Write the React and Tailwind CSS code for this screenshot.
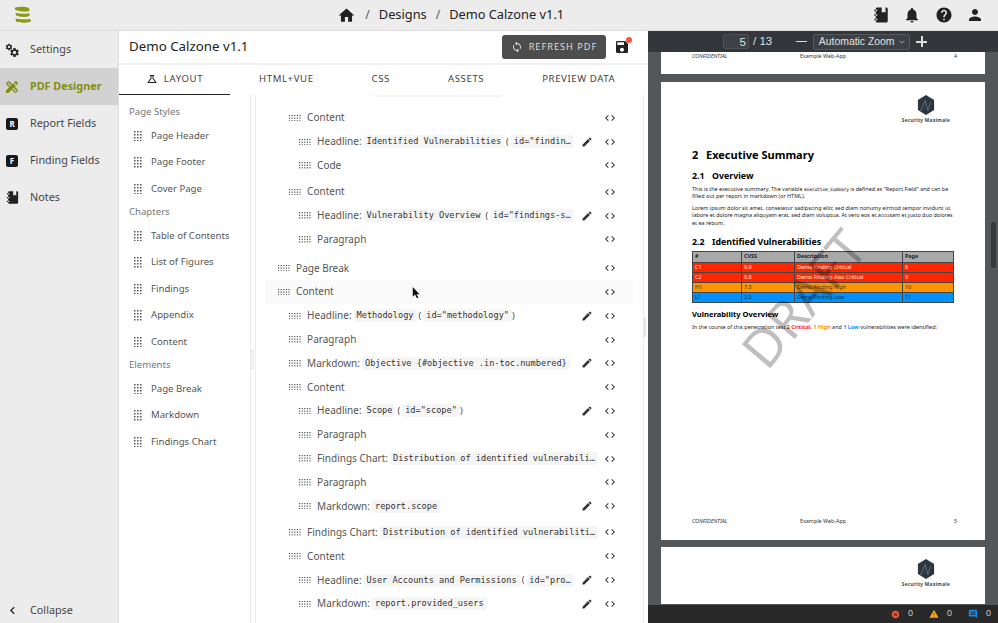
import { MdHome, MdNotifications, MdHelp, MdPerson, MdEdit, MdCode, MdSync, MdSave, MdChevronLeft, MdSettings, MdDesignServices, MdOutlineScience, MdCancel, MdWarning, MdComment } from "react-icons/md";

const notebook = "M3,7V5H5V4C5,2.89 5.9,2 7,2H13V9L15.5,7.5L18,9V2H19C20.05,2 21,2.95 21,4V20C21,21.05 20.05,22 19,22H7C5.95,22 5,21.05 5,20V19H3V17H5V13H3V11H5V7H3M7,11H5V13H7V11M7,7V5H5V7H7M7,19V17H5V19H7Z";

const Notebook = ({ className }) => (
    <svg viewBox="0 0 24 24" className={className} fill="currentColor"><path d={notebook} /></svg>
);

const Dots = ({ cols, rows, step = 2.6, size = 1.2, className }) => {
    const dots = [];
    for (let y = 0; y < rows; y++) {
        for (let x = 0; x < cols; x++) {
            dots.push(<rect key={x + "-" + y} x={x * step} y={y * step} width={size} height={size} />);
        }
    }
    return (
        <svg width={(cols - 1) * step + size} height={(rows - 1) * step + size} className={className} fill="#555">{dots}</svg>
    );
};

const Logo = () => (
    <svg viewBox="0 0 18 18" className="h-[18px] w-[18px]" fill="#8a9a12">
        <path d="M1 1.5C5 .5 11 .5 15 2L15.5 5C11 6.2 5 5.5 1 3.8Z" />
        <path d="M1.5 6.8C6 8 11 8 15.5 7.2L15.5 10C11 11.5 6 11 2 9.6Z" />
        <path d="M1.5 12.5C6 13.5 12 13.2 16.5 13L17 15.5C12 17.2 6 17 2 15.5Z" />
    </svg>
);

const Letter = ({ children }) => (
    <span className="flex h-[12px] w-[12px] items-center justify-center rounded-[2px] bg-[#1a1a1a] text-[8px] font-bold leading-none text-white">{children}</span>
);

const Cogs = () => (
    <span className="relative block h-[14px] w-[14px]">
        <MdSettings className="absolute top-0 left-0 h-[8px] w-[8px] text-[#222]" />
        <MdSettings className="absolute right-[-1px] bottom-[-1px] h-[11px] w-[11px] text-[#222]" />
    </span>
);

const navItems = [
    { label: "Settings", icon: <Cogs /> },
    { label: "PDF Designer", icon: <MdDesignServices className="h-[16px] w-[16px] text-[#7f8f12]" />, active: true },
    { label: "Report Fields", icon: <Letter>R</Letter> },
    { label: "Finding Fields", icon: <Letter>F</Letter> },
    { label: "Notes", icon: <Notebook className="h-[15px] w-[15px] text-[#222]" /> },
];

const palette = [
    { title: "Page Styles", items: ["Page Header", "Page Footer", "Cover Page"] },
    { title: "Chapters", items: ["Table of Contents", "List of Figures", "Findings", "Appendix", "Content"] },
    { title: "Elements", items: ["Page Break", "Markdown", "Findings Chart"] },
];

const tabs = ["HTML+VUE", "CSS", "ASSETS", "PREVIEW DATA"];

// indent: 0 = page level, 1 = nested, 2 = nested twice
const tree = [
    { indent: 1, label: "Content" },
    { indent: 2, label: "Headline:", code: "Identified Vulnerabilities", id: 'id="findin…', edit: true },
    { indent: 2, label: "Code" },
    { indent: 1, label: "Content", gap: true },
    { indent: 2, label: "Headline:", code: "Vulnerability Overview", id: 'id="findings-s…', edit: true },
    { indent: 2, label: "Paragraph" },
    { indent: 0, label: "Page Break", bigGap: true },
    { indent: 0, label: "Content", hover: true },
    { indent: 1, label: "Headline:", code: "Methodology", id: 'id="methodology"', closed: true, edit: true },
    { indent: 1, label: "Paragraph" },
    { indent: 1, label: "Markdown:", code: "Objective {#objective .in-toc.numbered}", edit: true },
    { indent: 1, label: "Content" },
    { indent: 2, label: "Headline:", code: "Scope", id: 'id="scope"', closed: true, edit: true },
    { indent: 2, label: "Paragraph" },
    { indent: 2, label: "Findings Chart:", code: "Distribution of identified vulnerabili…" },
    { indent: 2, label: "Paragraph" },
    { indent: 2, label: "Markdown:", code: "report.scope", edit: true },
    { indent: 1, label: "Findings Chart:", code: "Distribution of identified vulnerabiliti…", gap: true },
    { indent: 1, label: "Content" },
    { indent: 2, label: "Headline:", code: "User Accounts and Permissions", id: 'id="pro…', edit: true },
    { indent: 2, label: "Markdown:", code: "report.provided_users", edit: true },
];

const Chip = ({ children }) => (
    <span className="whitespace-nowrap rounded-[3px] bg-[#f5f5f5] px-[3px] text-[8.6px] leading-[13px] text-[#333] [font-family:'DejaVu_Sans_Mono',monospace]">{children}</span>
);

const TreeRow = ({ row }) => (
    <div className={"flex h-[23.8px] items-center pr-[17px] " + (row.hover ? "bg-[#fafafa] " : "") + (row.gap ? "mt-[2.5px] " : "") + (row.bigGap ? "mt-[5px] " : "") + (row.indent === 0 ? "pl-[13px]" : row.indent === 1 ? "pl-[24px]" : "pl-[34px]")}>
        <Dots cols={5} rows={3} className="mr-[6.5px] shrink-0" />
        <span className="mr-[2px] shrink-0 text-[10px] text-[#555]">{row.label}</span>
        {row.code && <Chip>{row.code}</Chip>}
        {row.id && (
            <span className="ml-[2px] flex items-center text-[9px] text-[#444]">
                <span className="mr-[2px]">(</span>
                <Chip>{row.id}</Chip>
                {row.closed && <span>)</span>}
            </span>
        )}
        <span className="flex-1" />
        {row.edit && <MdEdit className="mr-[11px] h-[12px] w-[12px] shrink-0 text-[#333]" />}
        <MdCode className="h-[12px] w-[12px] shrink-0 text-[#333]" />
    </div>
);

const ToolbarSep = () => <span className="text-[12px] text-[#555]">/</span>;

const TopBar = () => (
    <header className="flex h-[31px] shrink-0 items-center border-b border-[#dcdcdc] bg-[#ececec]">
        <div className="w-[118px] pl-[14px]"><Logo /></div>
        <div className="flex flex-1 items-center justify-center gap-[9px] pr-[88px] text-[12.8px] text-[#222]">
            <MdHome className="h-[19px] w-[19px] text-[#222]" />
            <ToolbarSep />
            <span>Designs</span>
            <ToolbarSep />
            <span>Demo Calzone v1.1</span>
        </div>
        <div className="flex items-center gap-[13.5px] pr-[14px] text-[#222]">
            <Notebook className="h-[18px] w-[18px]" />
            <MdNotifications className="h-[18px] w-[18px]" />
            <MdHelp className="h-[18px] w-[18px]" />
            <MdPerson className="h-[18px] w-[18px]" />
        </div>
    </header>
);

const Sidebar = () => (
    <nav className="flex w-[119px] shrink-0 flex-col border-r border-[#dedede] bg-[#ececec]">
        {navItems.map((item) => (
            <div key={item.label} className={"flex h-[37px] items-center " + (item.active ? "bg-[#d2d2d2]" : "")}>
                <span className="mr-[6px] flex w-[24px] justify-center">{item.icon}</span>
                <span className={"text-[10.8px] " + (item.active ? "font-bold text-[#7f8f12]" : "text-[#444]")}>{item.label}</span>
            </div>
        ))}
        <div className="mt-auto flex h-[26px] items-center">
            <span className="mr-[6px] flex w-[24px] justify-center"><MdChevronLeft className="h-[15px] w-[15px] text-[#222]" /></span>
            <span className="text-[10.8px] text-[#444]">Collapse</span>
        </div>
    </nav>
);

const Palette = () => (
    <div className="w-[132px] shrink-0 border-r border-[#ececec] pt-[7px]">
        {palette.map((group) => (
            <div key={group.title}>
                <div className="pl-[10px] text-[9.6px] leading-[20.5px] text-[#777]">{group.title}</div>
                {group.items.map((item) => (
                    <div key={item} className="flex h-[26.5px] items-center pl-[15px]">
                        <Dots cols={3} rows={4} step={3} size={1.5} className="mr-[9.5px]" />
                        <span className="text-[9.6px] text-[#555]">{item}</span>
                    </div>
                ))}
            </div>
        ))}
    </div>
);

const Designer = () => (
    <section className="flex w-[529px] shrink-0 flex-col overflow-hidden bg-white">
        <div className="flex h-[34px] shrink-0 items-center border-b-2 border-[#f1f1f1] pl-[10px]">
            <h1 className="text-[13.3px] text-[#222]">Demo Calzone v1.1</h1>
            <button className="ml-auto flex h-[24px] w-[104px] items-center justify-center gap-[6px] rounded-[3px] bg-[#4d4d4d] text-[9.2px] tracking-[1px] text-[#ddd]">
                <MdSync className="h-[12px] w-[12px]" />
                REFRESH PDF
            </button>
            <span className="relative mr-[18px] ml-[8px]">
                <MdSave className="h-[16px] w-[16px] text-[#222]" />
                <span className="absolute top-[-2px] right-[-2px] h-[6px] w-[6px] rounded-full bg-[#f4553b]" />
            </span>
        </div>
        <div className="flex h-[30px] shrink-0 items-center text-[9.6px] tracking-[0.6px] text-[#444]">
            <div className="flex h-full w-[111px] items-center justify-center gap-[6px] border-b border-[#222] pb-[1px]">
                <MdOutlineScience className="h-[12px] w-[12px] text-[#222]" />
                LAYOUT
            </div>
            {tabs.map((tab) => (
                <div key={tab} className="px-[29px] pb-[1px]">{tab}</div>
            ))}
        </div>
        <div className="flex min-h-0 flex-1 overflow-hidden">
            <Palette />
            <div className="relative flex w-[4px] shrink-0 items-start">
                <span className="mt-[254px] h-[21px] w-[3px] bg-[#efefef]" />
            </div>
            <div className="relative min-w-0 flex-1 overflow-hidden border-x border-[#ececec] pr-[10px] pl-[9px]">
                <div className="h-[2px] overflow-hidden">
                    <div className="-mt-[11px] ml-[108px] h-[13px] w-[130px] rounded-[3px] bg-[#f5f5f5]" />
                </div>
                <div className="mt-[9px]">
                    {tree.map((row, i) => <TreeRow key={i} row={row} />)}
                </div>
                <svg viewBox="0 0 12 16" className="absolute top-[192px] left-[156px] h-[12px] w-[9px]" fill="#111"><path d="M1 0V13L4 10L6.5 15L8.5 14L6 9.5H10Z" /></svg>
            </div>
            <div className="relative flex w-[4px] shrink-0 items-start">
                <span className="mt-[222px] h-[20px] w-[2px] bg-[#e6e6e6]" />
            </div>
        </div>
    </section>
);

const Watermark = () => (
    <div className="absolute top-[216px] left-[142px] -translate-x-1/2 -translate-y-1/2 -rotate-[50deg] text-[52px] leading-none text-black/25">DRAFT</div>
);

const Letterhead = () => (
    <div className="mr-[35px] flex w-[48px] flex-col items-center self-end">
        <svg viewBox="0 0 20 22" className="h-[20px] w-[18px]">
            <path d="M10 0L19 5.5V16.5L10 22L1 16.5V5.5Z" fill="#2d3640" />
            <path d="M4 18L9 6L12 17L15 8" fill="none" stroke="#8b939b" strokeWidth=".6" />
        </svg>
        <span className="mt-[2px] whitespace-nowrap text-[4.7px] font-bold tracking-[0.3px] text-[#444]">Security Maximale</span>
    </div>
);

const PageFooter = ({ page }) => (
    <div className="flex items-center text-[5.4px] text-[#333]">
        <span className="w-[139px] pl-[31px] italic">CONFIDENTIAL</span>
        <span className="flex-1">Example Web-App</span>
        <span className="pr-[28px]">{page}</span>
    </div>
);

const rowsTable = [
    { id: "C1", cvss: "9.9", title: "Demo Finding Critical", page: "8", color: "bg-[#ff2600] text-white/90" },
    { id: "C2", cvss: "9.8", title: "Demo Finding Also Critical", page: "9", color: "bg-[#ff2600] text-white/90" },
    { id: "H1", cvss: "7.5", title: "Demo Finding High", page: "10", color: "bg-[#ff9300] text-[#333]" },
    { id: "L1", cvss: "2.2", title: "Demo Finding Low", page: "11", color: "bg-[#0091ff] text-[#033]" },
];

const TableRow = ({ cells, className }) => (
    <div className={"grid grid-cols-[49px_53px_108px_1fr] items-center border-t border-[#444] text-[5.4px] " + className}>
        {cells.map((cell, i) => (
            <span key={i} className="h-full border-l border-[#444] pl-[2px] leading-[9px]">{cell}</span>
        ))}
    </div>
);

const PdfPage = () => (
    <div className="relative flex h-[458px] shrink-0 flex-col overflow-hidden bg-white text-[#222]">
        <div className="flex flex-col pt-[13px]"><Letterhead /></div>
        <div className="px-[31px]">
            <h2 className="mt-[23px] flex text-[11px] leading-[15px] font-bold text-black"><span className="w-[14px]">2</span>Executive Summary</h2>
            <h3 className="mt-[8px] flex text-[8.8px] leading-[12px] font-bold text-black"><span className="w-[20px]">2.1</span>Overview</h3>
            <p className="mt-[4px] text-[5.45px] leading-[7.4px]">This is the executive summary. The variable <span className="bg-[#f2f2f2] text-[4.4px] [font-family:'DejaVu_Sans_Mono',monospace]">executive_summary</span> is defined as "Report Field" and can be filled out per report in markdown (or HTML).</p>
            <p className="mt-[4px] text-[5.45px] leading-[7.4px]">Lorem ipsum dolor sit amet, consetetur sadipscing elitr, sed diam nonumy eirmod tempor invidunt ut labore et dolore magna aliquyam erat, sed diam voluptua. At vero eos et accusam et justo duo dolores et ea rebum.</p>
            <h3 className="mt-[9px] flex text-[8.8px] leading-[12px] font-bold text-black"><span className="w-[20px]">2.2</span>Identified Vulnerabilities</h3>
            <div className="mt-[3px] border-r border-b border-[#444]">
                <TableRow cells={["#", "CVSS", "Description", "Page"]} className="h-[11px] bg-[#a9a9a9] font-bold text-[#222]" />
                {rowsTable.map((r) => (
                    <TableRow key={r.id} cells={[r.id, r.cvss, r.title, r.page]} className={"h-[10px] " + r.color} />
                ))}
            </div>
            <h4 className="mt-[6px] text-[7.6px] leading-[10px] font-bold text-black">Vulnerability Overview</h4>
            <p className="mt-[5px] text-[5.45px] leading-[7.4px]">In the course of this penetration test <b className="text-[#ff2600]">2 Critical</b>, <b className="text-[#ff9300]">1 High</b> and <b className="text-[#0091ff]">1 Low</b> vulnerabilities were identified:</p>
        </div>
        <Watermark />
        <div className="mt-auto pb-[15px]"><PageFooter page="5" /></div>
    </div>
);

const PdfViewer = () => (
    <section className="relative flex min-w-0 flex-1 flex-col overflow-hidden bg-[#53575a] [font-family:'Liberation_Sans',sans-serif]">
        <div className="flex h-[21px] shrink-0 items-center bg-[#33363b] pl-[75px] text-[#e0e0e0]">
            <span className="h-[15px] w-[26px] rounded-[2px] border border-[#4d5055] bg-[#3d4045] pr-[2px] text-right text-[11.5px] leading-[14px]">5</span>
            <span className="ml-[4px] text-[11.5px]">/ 13</span>
            <span className="ml-[24px] h-[1.5px] w-[11px] bg-[#ddd]" />
            <span className="ml-[6px] flex h-[16px] w-[97px] items-center justify-center rounded-[2px] border border-[#55585d] bg-[#3d4045] text-[10.4px]">Automatic Zoom <svg viewBox="0 0 8 5" className="ml-[4px] h-[4px] w-[6px]" fill="none" stroke="#ccc"><path d="M1 1L4 4L7 1" /></svg></span>
            <span className="relative ml-[6px] h-[11px] w-[11px]">
                <span className="absolute top-[5px] left-0 h-[1.5px] w-[11px] bg-[#ddd]" />
                <span className="absolute top-0 left-[5px] h-[11px] w-[1.5px] bg-[#ddd]" />
            </span>
        </div>
        <div className="flex min-h-0 flex-1 flex-col gap-[7px] overflow-hidden px-[13px] [font-family:'Noto_Sans',sans-serif]">
            <div className="h-[22px] shrink-0 bg-white"><PageFooter page="4" /></div>
            <div className="mt-[1px]"><PdfPage /></div>
            <div className="flex h-[57px] shrink-0 flex-col bg-white pt-[12px]"><Letterhead /></div>
        </div>
        <div className="absolute top-[191px] right-[2px] h-[46px] w-[5px] rounded-[3px] bg-[#33383c]" />
        <div className="flex h-[18px] shrink-0 items-center justify-end gap-[5px] bg-[#292929] pr-[7px] text-[9px] text-[#ccc]">
            <MdCancel className="h-[9px] w-[9px] text-[#f4553b]" />
            <span className="mr-[11px] ml-[3px]">0</span>
            <MdWarning className="h-[10px] w-[10px] text-[#f5a623]" />
            <span className="mr-[11px] ml-[3px]">0</span>
            <MdComment className="h-[10px] w-[10px] text-[#1e88e5]" />
            <span className="ml-[3px]">0</span>
        </div>
    </section>
);

export default function App() {
    return (
        <div className="flex h-[623px] w-[998px] flex-col overflow-hidden bg-white [font-family:'Noto_Sans',sans-serif]">
            <TopBar />
            <div className="flex min-h-0 flex-1">
                <Sidebar />
                <Designer />
                <PdfViewer />
            </div>
        </div>
    );
}
